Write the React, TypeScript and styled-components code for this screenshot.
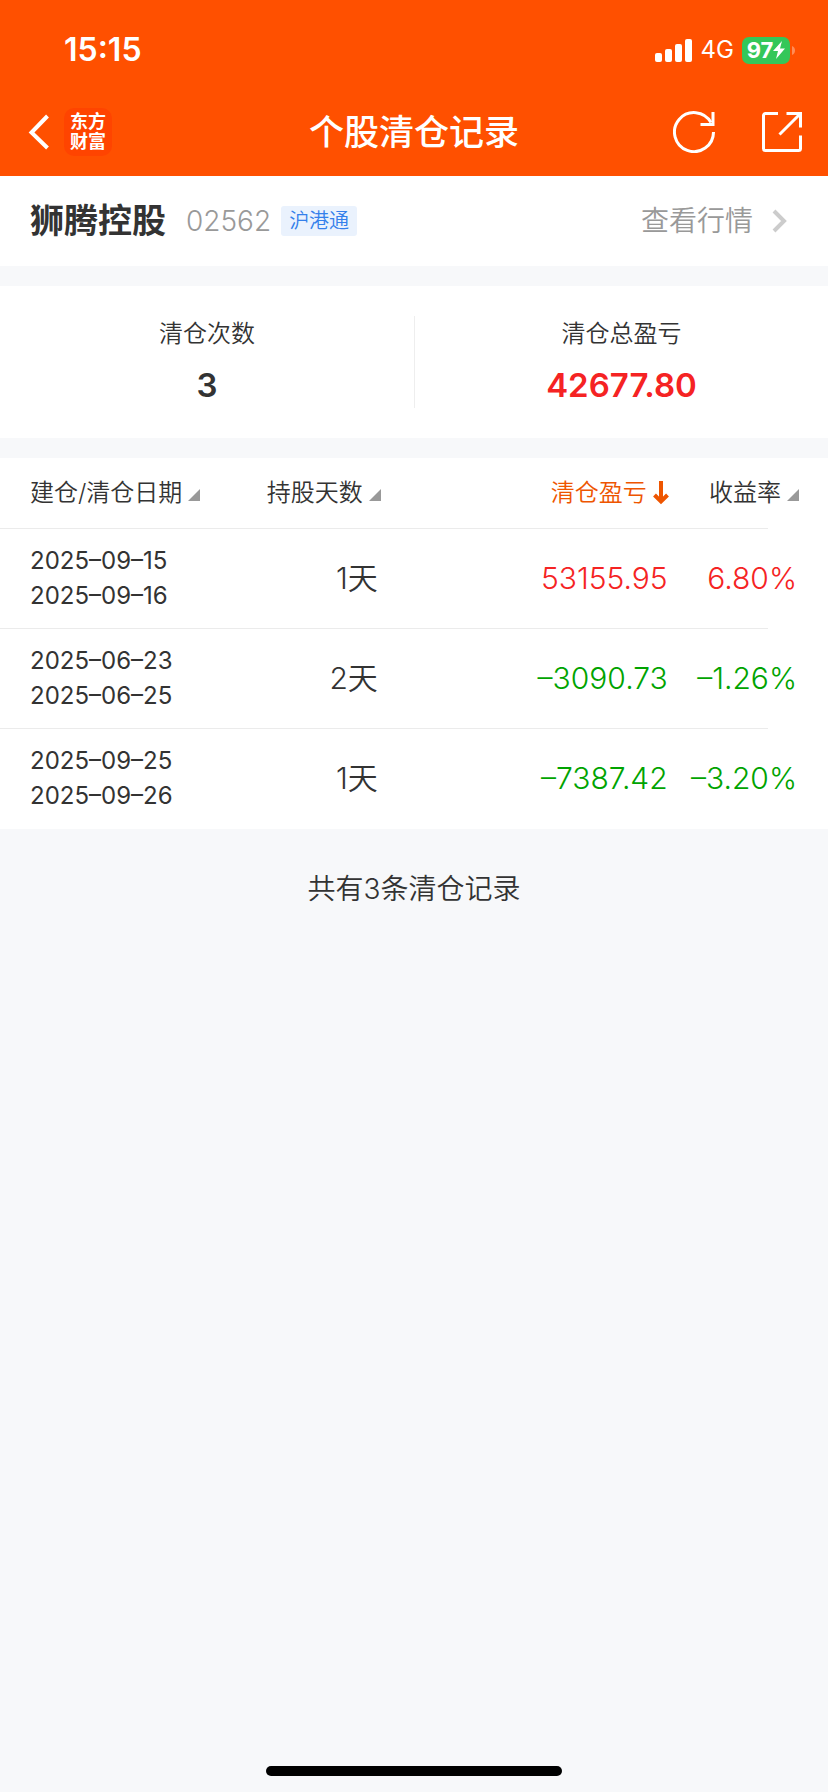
import React from 'react';
import styled, { createGlobalStyle } from 'styled-components';

const GlobalStyle = createGlobalStyle`
  *, *::before, *::after { box-sizing: border-box; }
  body {
    margin: 0;
    background: #f7f8fa;
    color: #333;
    font-family: Inter, "Noto Sans CJK SC", sans-serif;
    font-weight: 350;
  }
  h1, h2, p, dl, dd { margin: 0; }
  button {
    padding: 0;
    border: 0;
    background: none;
    color: inherit;
    font: inherit;
    cursor: pointer;
  }
  svg { display: block; }
`;

const Page = styled.div`
  display: flex;
  flex-direction: column;
  min-height: 100vh;
`;

const Header = styled.header`
  background: #ff5000;
  color: #fff;
`;

const StatusBar = styled.div`
  display: flex;
  align-items: center;
  justify-content: space-between;
  height: 88px;
  padding: 12px 33px 0 64px;
`;

const Clock = styled.time`
  font-size: 32px;
  line-height: 40px;
  font-weight: 600;
`;

const StatusIcons = styled.div`
  display: flex;
  align-items: center;
  gap: 8px;
`;

const Network = styled.span`
  font-size: 24px;
  line-height: 28px;
  font-weight: 400;
`;

const Battery = styled.div`
  display: flex;
  align-items: center;
  gap: 2px;
`;

const BatteryBody = styled.span`
  display: flex;
  align-items: center;
  justify-content: center;
  width: 48px;
  height: 27px;
  border-radius: 7px;
  background: #34c759;
  font-size: 22px;
  line-height: 27px;
  font-weight: 700;
`;

const NavBar = styled.nav`
  display: grid;
  grid-template-columns: 1fr auto 1fr;
  align-items: center;
  height: 88px;
  padding: 0 25px;
`;

const NavStart = styled.div`
  display: flex;
  align-items: center;
  gap: 14px;
  padding-left: 3px;
`;

const NavEnd = styled.div`
  display: flex;
  align-items: center;
  justify-content: flex-end;
  gap: 46px;
`;

const Title = styled.h1`
  font-size: 35px;
  line-height: 44px;
  font-weight: 500;
`;

const Logo = styled.span`
  display: flex;
  flex-direction: column;
  align-items: center;
  justify-content: center;
  width: 48px;
  height: 48px;
  border-radius: 10px;
  background: #ff4400;
  font-size: 18px;
  line-height: 20px;
  font-weight: 700;
`;

const Panel = styled.section`
  margin-bottom: 20px;
  background: #fff;
`;

const StockRow = styled(Panel)`
  display: flex;
  align-items: center;
  height: 90px;
  padding: 0 40px 0 30px;
`;

const StockName = styled.h2`
  font-size: 34px;
  line-height: 44px;
  font-weight: 700;
`;

const StockCode = styled.span`
  margin-left: 20px;
  color: #999;
  font-size: 28px;
  line-height: 44px;
  font-weight: 300;
`;

const MarketTag = styled.span`
  margin-left: 10px;
  padding: 0 8px;
  border-radius: 3px;
  background: #eaf2fd;
  color: #3480eb;
  font-size: 20px;
  line-height: 30px;
`;

const QuoteLink = styled.a`
  display: flex;
  align-items: center;
  gap: 18px;
  margin-left: auto;
  color: #999;
  font-size: 28px;
  line-height: 44px;
  text-decoration: none;
`;

const Summary = styled(Panel)`
  padding: 30px 0;
`;

const SummaryList = styled.dl`
  display: grid;
  grid-template-columns: 1fr 1fr;
`;

const SummaryItem = styled.div`
  height: 92px;
  text-align: center;

  & + & { border-left: 1px solid #eee; }
`;

const SummaryLabel = styled.dt`
  font-size: 24px;
  line-height: 36px;
`;

const SummaryValue = styled.dd<{ $color?: string }>`
  margin-top: 11px;
  color: ${(p) => p.$color ?? 'inherit'};
  font-size: 33px;
  line-height: 44px;
  font-weight: 600;
`;

const RecordTable = styled.table`
  width: 100%;
  border-spacing: 0;
  table-layout: fixed;
  background: #fff;
`;

const Col = styled.col<{ $width: string }>`
  width: ${(p) => p.$width};
`;

/* Row rule stops short of the right edge. */
const Row = styled.tr`
  &:not(:last-child), thead & {
    background: linear-gradient(#ebebeb, #ebebeb) left bottom / calc(100% - 60px) 1px no-repeat;
  }
`;

const HeadCell = styled.th<{ $align?: string }>`
  height: 71px;
  padding: 0 0 2px;
  font-weight: 350;
  text-align: ${(p) => p.$align ?? 'right'};

  &:first-child { padding-left: 30px; }
  &:nth-child(3) { padding-right: 2px; }
  &:last-child { padding-right: 29px; }
`;

const SortButton = styled.button<{ $active?: boolean }>`
  display: inline-flex;
  align-items: center;
  gap: 6px;
  color: ${(p) => (p.$active ? '#ee5500' : 'inherit')};
  font-size: 24px;
  line-height: 36px;
  white-space: nowrap;
`;

const SortMark = styled.svg`
  margin-top: 4px;
`;

const Cell = styled.td<{ $color?: string }>`
  height: 100px;
  padding: 0 3px 2px 0;
  color: ${(p) => p.$color ?? 'inherit'};
  font-size: 30px;
  line-height: 40px;
  text-align: right;
  white-space: nowrap;

  &:last-child { padding-right: 31px; }
`;

const DateCell = styled.td`
  padding: 0 0 2px 30px;
  font-size: 24px;
  line-height: 35px;
  font-weight: 400;
`;

const DateLine = styled.time`
  display: block;
`;

const Footnote = styled.p`
  padding-top: 40px;
  font-size: 28px;
  line-height: 40px;
  text-align: center;
`;

const HomeIndicator = styled.div`
  width: 296px;
  height: 10px;
  margin: auto auto 16px;
  border-radius: 5px;
  background: #000;
`;

const RED = '#f52323';
const GREEN = '#00a300';

const records = [
  { opened: '2025–09–15', closed: '2025–09–16', days: '1天', profit: '53155.95', rate: '6.80%', color: RED },
  { opened: '2025–06–23', closed: '2025–06–25', days: '2天', profit: '–3090.73', rate: '–1.26%', color: GREEN },
  { opened: '2025–09–25', closed: '2025–09–26', days: '1天', profit: '–7387.42', rate: '–3.20%', color: GREEN },
];

const Triangle = () => (
  <SortMark width="12" height="12" viewBox="0 0 12 12" aria-hidden="true">
    <path d="M12 0v12H0z" fill="#999" />
  </SortMark>
);

export default function App() {
  return (
    <Page>
      <GlobalStyle />
      <Header>
        <StatusBar>
          <Clock>15:15</Clock>
          <StatusIcons>
            <svg width="38" height="24" viewBox="0 0 38 24" fill="#fff" aria-hidden="true">
              <rect x="0" y="15" width="7" height="9" rx="2" />
              <rect x="10" y="11" width="7" height="13" rx="2" />
              <rect x="20" y="6" width="7" height="18" rx="2" />
              <rect x="30" y="1" width="7" height="23" rx="2" />
            </svg>
            <Network>4G</Network>
            <Battery>
              <BatteryBody>
                97
                <svg width="12" height="18" viewBox="0 0 12 18" fill="#fff" aria-hidden="true">
                  <path d="M9 0 0 10h5L3 18l9-10.500H7z" />
                </svg>
              </BatteryBody>
              <svg width="3" height="9" viewBox="0 0 3 9" aria-hidden="true">
                <path d="M0 0c4 1.500 4 7.500 0 9z" fill="#ff8c57" />
              </svg>
            </Battery>
          </StatusIcons>
        </StatusBar>
        <NavBar>
          <NavStart>
            <button type="button" aria-label="返回">
              <svg width="22" height="36" viewBox="0 0 22 36" fill="none" stroke="#fff" strokeWidth="4">
                <path d="M19.500 2 3.500 18.500 19.500 34" />
              </svg>
            </button>
            <Logo>
              <span>东方</span>
              <span>财富</span>
            </Logo>
          </NavStart>
          <Title>个股清仓记录</Title>
          <NavEnd>
            <button type="button" aria-label="刷新">
              <svg width="42" height="42" viewBox="0 0 42 42" fill="none" stroke="#fff" strokeWidth="3">
                <path d="M40.500 21A19.500 19.500 0 1 1 38 11.500" />
                <path d="M40 1v12.500H27.500" />
              </svg>
            </button>
            <button type="button" aria-label="分享">
              <svg width="42" height="42" viewBox="0 0 42 42" fill="none" stroke="#fff" strokeWidth="3">
                <path d="M17 2.500H4.500a2 2 0 0 0-2 2v33a2 2 0 0 0 2 2h33a2 2 0 0 0 2-2V24.500" />
                <path d="M25.500 2.500h14v14M39 3 18.500 23.500" />
              </svg>
            </button>
          </NavEnd>
        </NavBar>
      </Header>

      <main>
        <StockRow>
          <StockName>狮腾控股</StockName>
          <StockCode>02562</StockCode>
          <MarketTag>沪港通</MarketTag>
          <QuoteLink href="#quote">
            查看行情
            <svg width="17" height="24" viewBox="0 0 17 24" fill="none" stroke="#ccc" strokeWidth="4" aria-hidden="true">
              <path d="M3 2 13 12 3 22" />
            </svg>
          </QuoteLink>
        </StockRow>

        <Summary>
          <SummaryList>
            <SummaryItem>
              <SummaryLabel>清仓次数</SummaryLabel>
              <SummaryValue>3</SummaryValue>
            </SummaryItem>
            <SummaryItem>
              <SummaryLabel>清仓总盈亏</SummaryLabel>
              <SummaryValue $color={RED}>42677.80</SummaryValue>
            </SummaryItem>
          </SummaryList>
        </Summary>

        <RecordTable>
          <colgroup>
            <Col $width="30%" />
            <Col $width="16%" />
            <Col $width="35%" />
            <Col $width="19%" />
          </colgroup>
          <thead>
            <Row>
              <HeadCell scope="col" $align="left">
                <SortButton type="button">建仓/清仓日期<Triangle /></SortButton>
              </HeadCell>
              <HeadCell scope="col">
                <SortButton type="button">持股天数<Triangle /></SortButton>
              </HeadCell>
              <HeadCell scope="col" aria-sort="descending">
                <SortButton type="button" $active>
                  清仓盈亏
                  <svg width="16" height="24" viewBox="0 0 16 24" fill="none" stroke="#ee5500" strokeWidth="4" aria-hidden="true">
                    <path d="M8 0v21M1.500 14 8 20.500 14.500 14" />
                  </svg>
                </SortButton>
              </HeadCell>
              <HeadCell scope="col">
                <SortButton type="button">收益率<Triangle /></SortButton>
              </HeadCell>
            </Row>
          </thead>
          <tbody>
            {records.map((r) => (
              <Row key={r.opened}>
                <DateCell>
                  <DateLine>{r.opened}</DateLine>
                  <DateLine>{r.closed}</DateLine>
                </DateCell>
                <Cell>{r.days}</Cell>
                <Cell $color={r.color}>{r.profit}</Cell>
                <Cell $color={r.color}>{r.rate}</Cell>
              </Row>
            ))}
          </tbody>
        </RecordTable>

        <Footnote>共有3条清仓记录</Footnote>
      </main>
      <HomeIndicator />
    </Page>
  );
}
